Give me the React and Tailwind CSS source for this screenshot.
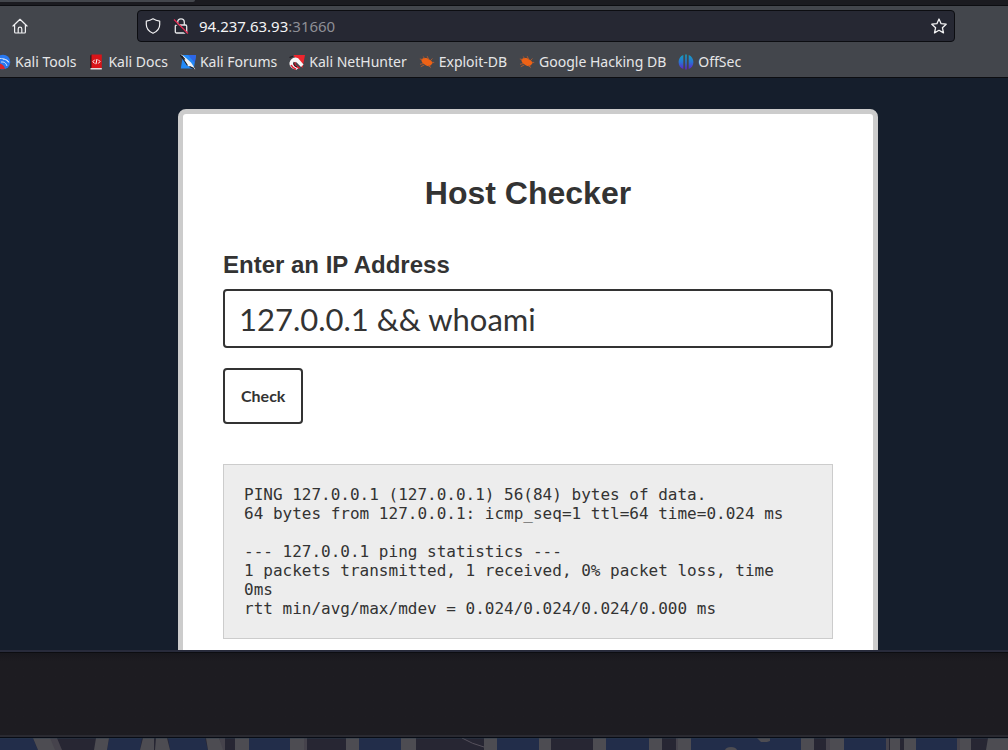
import React from "react";

const HomeIcon = () => (
  <svg viewBox="0 0 16 16" className="size-4" fill="none" stroke="#f0f0f2" strokeWidth="1.2" strokeLinejoin="round" strokeLinecap="round">
    <path d="M1 8 8 1.3 15 8M2.6 6.7V14a1 1 0 0 0 1 1h8.8a1 1 0 0 0 1-1V6.7M6.2 15v-4a1.8 1.8 0 0 1 3.6 0v4" />
  </svg>
);

const ShieldIcon = () => (
  <svg viewBox="0 0 16 16" className="size-4" fill="none" stroke="#f0f0f2" strokeWidth="1.2" strokeLinejoin="round">
    <path d="M8 .8c2 1.3 4.2 2 6.7 2.3v3.4c0 4-2.5 7-6.7 8.8-4.200-1.800-6.700-4.800-6.700-8.800V3.100C3.800 2.800 6 2.100 8 .8Z" />
  </svg>
);

const InsecureLockIcon = () => (
  <svg viewBox="0 0 16 16" className="size-4" fill="none" strokeLinejoin="round">
    <path d="M4.700 7V4.200a3.300 3.300 0 0 1 6.600 0V7M3.500 7h9a1.200 1.200 0 0 1 1.200 1.200v5.600a1.200 1.200 0 0 1-1.200 1.200h-9a1.200 1.200 0 0 1-1.200-1.200V8.200A1.200 1.200 0 0 1 3.500 7Z" stroke="#e8e8ea" strokeWidth="1.3" />
    <path d="M.8 3.200 13.600 16" stroke="#262833" strokeWidth="1.500" />
    <path d="M1 1.500 15 15.500" stroke="#e22850" strokeWidth="1.300" />
  </svg>
);

const StarIcon = () => (
  <svg viewBox="0 0 16 16" className="size-4" fill="none" stroke="#f4f4f5" strokeWidth="1.300" strokeLinejoin="round">
    <path d="M8 1 10.100 5.700 15.200 6.200 11.400 9.700 12.500 14.900 8 12.300 3.500 14.900 4.600 9.700.8 6.200 5.900 5.700Z" />
  </svg>
);

const ToolsIcon = () => (
  <svg viewBox="0 0 16 16" className="size-4">
    <circle cx="8" cy="8" r="7.300" fill="#2878f0" />
    <path d="M3 4.500c5-.5 9 1 10.500 4M6 8c3-.5 5 .8 6 4M8 5.200c3 0 5 1 6 3" fill="none" stroke="#c7dcfa" strokeWidth="1" />
    <path d="M1 9c4 0 8 1 9 6H5C2.500 14 1 12 1 9Z" fill="#d9262c" />
  </svg>
);

const DocsIcon = () => (
  <svg viewBox="0 0 16 16" className="size-4">
    <path d="M2.200 1.500 4 .5v13.200l-1.800 1Z" fill="#3a1517" />
    <path d="M3.500.5h10.300v14.200H3.500Z" fill="#d91418" />
    <path d="M2.500 14h11.300v1.500H2.500Z" fill="#e8dcdc" />
    <path d="m6.700 5.700-1.800 2 1.800 1.800m3.600-3.800 1.700 1.800-1.700 2M9 5l-1.100 5.200" fill="none" stroke="#fff" strokeWidth="1" />
  </svg>
);

const ForumsIcon = () => (
  <svg viewBox="0 0 16 16" className="size-4">
    <path d="M3 1h13l-2.200 13.500H.8Z" fill="#238af7" />
    <path d="M8 1h8l-1.200 8Z" fill="#2d66e8" />
    <path d="M0 .5c2 .2 4 1.500 6 3.500l5 4.500 2 3 2.300 4-4.200-2.500-4-1.500L4.500 7Z" fill="#f1f4f6" />
    <path d="M0 .5 4.500 7l3 4.500M1.500 1.500 5 5.500M9.500 12.500l4.500 2" fill="none" stroke="#17191e" strokeWidth="1.100" />
  </svg>
);

const NetHunterIcon = () => (
  <svg viewBox="0 0 16 16" className="size-4">
    <path d="M4.500 1H16l-2.500 13L9 9Z" fill="#ee252d" />
    <path d="M.5 8.500C2 4 6 2.500 9.200 4.200l5.300 6.300-2.500 2.400-4.300-4.300C6 7.300 4 9.200 5.500 11l4 3-2 1.700C3 15 0 12.500.5 8.500Z" fill="#f8f6f6" />
    <path d="M6.500 8.500C5 9.500 5.300 11 7 12l3.500 2.200M2 11c1 2 3 3.500 5 4.200" fill="none" stroke="#e51d30" strokeWidth="1.600" />
    <path d="M.5 3.500 4 2.200M5.200 8C4 9.500 5 12 8 13" fill="none" stroke="#221b20" strokeWidth="1.200" />
  </svg>
);

const ExploitIcon = () => (
  <svg viewBox="0 0 16 16" className="size-4">
    <path d="M2.500 5.200c2-1.700 5.500-1.800 7.500.2 2.200.5 3.400 2 3.400 4.100l-1.900 2.100c-1.900 1-4.700.3-6-1.300C3.300 9.300 2 7 2.500 5.200Z" fill="#ee6216" />
    <path d="M3.500 5.500.8 5M4.500 9.500l-3.500.8M5.500 10.800l-3.700 2M9.800 5.500 8.200 2.200M11.400 6.700l2-2.200M12.900 8.400h2.300M9 11.500l3 2M5.500 4.500l-1.200-2" fill="none" stroke="#b85b2c" strokeWidth=".9" />
  </svg>
);

const OffSecIcon = () => (
  <svg viewBox="0 0 16 16" className="size-4">
    <defs>
      <linearGradient id="offsec" x1="0" y1="0" x2="0" y2="16" gradientUnits="userSpaceOnUse">
        <stop stopColor="#12a4bd" />
        <stop offset=".5" stopColor="#2874d2" />
        <stop offset="1" stopColor="#6518ca" />
      </linearGradient>
    </defs>
    <path d="M5.300 1v14C2.400 14 .6 11.400.6 8S2.400 2.100 5.300 1ZM7.200.6h1.600v14.900H7.200ZM10.700 1v14c2.900-1 4.700-3.600 4.700-7s-1.800-5.900-4.700-7Z" fill="url(#offsec)" />
  </svg>
);

const bookmarks = [
  { label: "Kali Tools", Icon: ToolsIcon },
  { label: "Kali Docs", Icon: DocsIcon },
  { label: "Kali Forums", Icon: ForumsIcon },
  { label: "Kali NetHunter", Icon: NetHunterIcon },
  { label: "Exploit-DB", Icon: ExploitIcon },
  { label: "Google Hacking DB", Icon: ExploitIcon },
  { label: "OffSec", Icon: OffSecIcon },
];

const pingOutput = `PING 127.0.0.1 (127.0.0.1) 56(84) bytes of data.
64 bytes from 127.0.0.1: icmp_seq=1 ttl=64 time=0.024 ms

--- 127.0.0.1 ping statistics ---
1 packets transmitted, 1 received, 0% packet loss, time 0ms
rtt min/avg/max/mdev = 0.024/0.024/0.024/0.000 ms`;

const Wallpaper = () => (
  <svg viewBox="0 0 1008 12" preserveAspectRatio="xMinYMin slice" className="block h-3 w-full" aria-hidden="true">
    <path d="M0 0h1008v12H0Z" fill="#272633" />
    <path d="M0 0h33l5 12H0ZM109 0h33l-2 12h-33ZM168 0h37l3 12h-38ZM249 0h41v12h-41ZM359 0h42v12h-42ZM497 0h42v12h-42ZM606 0h43v12h-43ZM691 0h110v12H691ZM844 0h42v12h-42ZM916 0h41v12h-41Z" fill="#222d4a" />
    <path d="M33 0h23l5 12H38ZM96 0h13l-2 12H94ZM143 0h11v12h-14ZM156 0h11l3 12h-15ZM206 0h13l6 12h-17ZM235 0h14v12h-14ZM290 0h14v12h-14ZM346 0h13v12h-13ZM401 0h15v12h-15ZM484 0h13v12h-13ZM539 0h12v12h-12ZM593 0h13v12h-13ZM649 0h13v12h-13ZM678 0h13v12h-13ZM757 0h13v3l-3 1h-6ZM725 12c1-4 11-4 12 0ZM801 0h13v12h-13ZM830 0h14v12h-14ZM890 0h10v12h-10ZM904 0h12v12h-12ZM960 0h11v12h-11ZM988 0h20v12h-22Z" fill="#4d4c52" />
    <path d="M50 0h7l5 12h-7ZM219 0h6v12h-2ZM304 0h3v12h-3ZM826 0h4v12h-4ZM886 0h3v12h-3ZM957 0h3v12h-3ZM676 0h2v12h-2Z" fill="#46434c" />
    <path d="M462 0q10 6 22 9" fill="none" stroke="#56515c" strokeWidth="1" />
    <path d="M0 0h1008v1H0Z" fill="#253d4a" opacity=".35" />
  </svg>
);

export default function App() {
  return (
    <div className="flex h-screen flex-col overflow-hidden bg-[#1d1c21] font-['Noto_Sans',sans-serif]">
      <div className="h-[6px] shrink-0 border-b border-[#0c0d11] bg-[#1b1b20]">
        <div className="h-[2px] w-[195px] rounded-br-sm bg-[#43464c]" />
      </div>

      <header className="shrink-0 border-b border-[#0c0d11] bg-[#43464c] pt-1">
        <div className="flex items-center pr-[53px]">
          <button type="button" aria-label="Home" className="ml-3 mr-[109px] shrink-0">
            <HomeIcon />
          </button>
          <div className="flex h-8 min-w-0 flex-1 items-center rounded-sm border border-[#0c0d11] bg-[#262833] px-[7px]">
            <button type="button" aria-label="Tracking protection" className="mr-3 shrink-0"><ShieldIcon /></button>
            <button type="button" aria-label="Connection not secure" className="mr-[10px] shrink-0"><InsecureLockIcon /></button>
            <a href="http://94.237.63.93:31660" className="min-w-0 flex-1 truncate text-[15px] leading-5 text-[#f4f4f5]">
              94.237.63.93<span className="text-[#8e8f96]">:31660</span>
            </a>
            <button type="button" aria-label="Bookmark this page" className="shrink-0"><StarIcon /></button>
          </div>
        </div>
        <nav aria-label="Bookmarks" className="-ml-[5px] flex h-[35px] items-center gap-3 pt-[5px]">
          {bookmarks.map(({ label, Icon }) => (
            <a key={label} href="#" className="flex shrink-0 items-center gap-1 text-sm leading-5 text-[#e6e6e8]">
              <Icon />
              {label}
            </a>
          ))}
        </nav>
      </header>

      <main className="min-h-0 flex-1 overflow-hidden bg-[#151e2c] pl-12 pt-[31px]">
        <section className="mx-auto w-full max-w-[700px] rounded-lg border-[5px] border-[#ccc] bg-white px-10 pb-16 pt-[60px] text-[#333]">
          <h1 className="text-center font-['Liberation_Sans',Arial,sans-serif] text-[32px] font-bold leading-[38px]">Host Checker</h1>
          <form className="mt-[39px]" onSubmit={(e) => e.preventDefault()}>
            <label htmlFor="ip" className="block font-['Liberation_Sans',Arial,sans-serif] text-2xl font-bold leading-7">
              Enter an IP Address
            </label>
            <input
              id="ip"
              type="text"
              defaultValue="127.0.0.1 && whoami"
              className="mt-[10px] block h-[59px] w-full rounded border-2 border-[#333] bg-white px-[14px] font-[Lato,sans-serif] text-[31px] outline-none"
            />
            <button type="submit" className="mt-5 block h-14 rounded border-2 border-[#333] bg-white px-4 font-[Lato,sans-serif] text-base font-bold">
              Check
            </button>
          </form>
          <pre className="mt-10 whitespace-pre-wrap border border-[#ccc] bg-[#ededed] p-5 font-['DejaVu_Sans_Mono',monospace] text-base leading-[19px]">
            {pingOutput}
          </pre>
        </section>
      </main>

      <footer className="shrink-0 border-t-2 border-[#282b3b]">
        <div className="h-[85px] border-b-2 border-t border-b-[#2a2a31] border-t-[#0c0d11] bg-linear-to-b from-[#18181d] to-[#1d1c21] to-10%" />
        <div className="h-px bg-[#080c15]" />
        <Wallpaper />
      </footer>
    </div>
  );
}
